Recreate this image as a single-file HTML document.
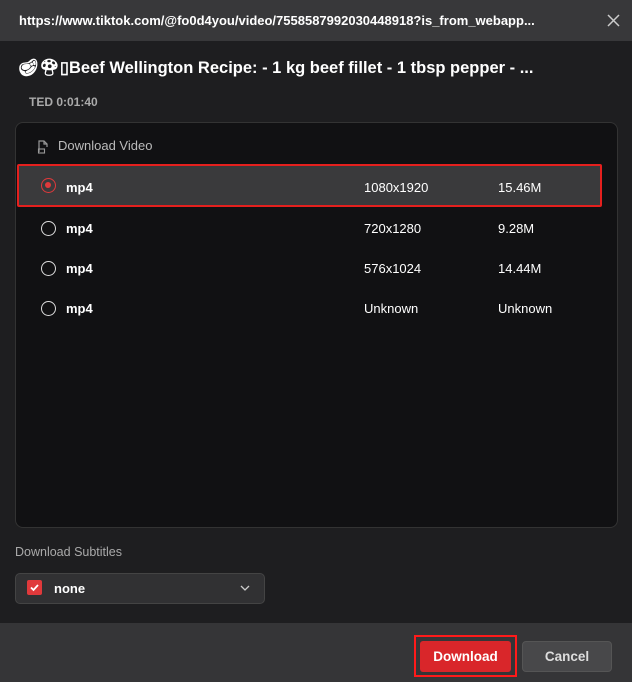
<!DOCTYPE html>
<html><head><style>
*{margin:0;padding:0;box-sizing:border-box}
body{width:632px;height:682px;background:#1e1e20;font-family:"Liberation Sans","Noto Sans CJK SC",sans-serif;color:#fff;position:relative;overflow:hidden;font-size:13px}
.abs{position:absolute}
.hdr{left:0;top:0;width:632px;height:41px;background:#38383a}
.row{left:17px;width:585px;height:40px}
.radio{position:absolute;left:24px;top:13px;width:15px;height:15px;border:1.5px solid #ddd;border-radius:50%}
.t{position:absolute;top:13px;font-size:13px}
</style></head><body>
<div class="abs hdr"></div>
<div class="abs" style="left:19px;top:13px;font-size:13px;font-weight:bold">https://www.tiktok.com/@fo0d4you/video/7558587992030448918?is_from_webapp...</div>
<svg class="abs" style="left:607px;top:14px" width="13" height="13"><path d="M1 1l11 11M12 1L1 12" stroke="#ccc" stroke-width="1.5"/></svg>
<div class="abs" style="left:18px;top:58px;font-size:16.5px;font-weight:bold">🥩︎🍄︎▯Beef Wellington Recipe: - 1 kg beef fillet - 1 tbsp pepper - ...</div>
<div class="abs" style="left:29px;top:95px;font-size:12px;color:#aaa;font-weight:bold">TED 0:01:40</div>
<div class="abs" style="left:15px;top:122px;width:603px;height:406px;background:#111113;border:1px solid #333;border-radius:8px"></div>
<svg class="abs" style="left:37px;top:140px" width="12" height="14" viewBox="0 0 12 14"><path d="M2 12V1h5l3 3v3M7 1v3h3" fill="none" stroke="#999" stroke-width="1.2"/><rect x="1.5" y="9" width="6" height="4" fill="none" stroke="#999" stroke-width="1.1"/></svg>
<div class="abs" style="left:58px;top:138px;color:#bbb;font-size:13px">Download Video</div>
<div class="abs row" style="top:164px;height:43px;background:#3a3a3c;border:2px solid #e5201e;border-radius:2px"><div class="radio" style="border-color:#e0393b;left:22px;top:12px"><div style="position:absolute;left:3px;top:3px;width:6px;height:6px;border-radius:50%;background:#e0393b"></div></div><div class="t" style="left:47px;top:14px;font-weight:bold">mp4</div><div class="t" style="left:345px;top:14px">1080x1920</div><div class="t" style="left:479px;top:14px">15.46M</div></div>
<div class="abs row" style="top:208px"><div class="radio"></div><div class="t" style="left:49px;font-weight:bold">mp4</div><div class="t" style="left:347px">720x1280</div><div class="t" style="left:481px">9.28M</div></div>
<div class="abs row" style="top:248px"><div class="radio"></div><div class="t" style="left:49px;font-weight:bold">mp4</div><div class="t" style="left:347px">576x1024</div><div class="t" style="left:481px">14.44M</div></div>
<div class="abs row" style="top:288px"><div class="radio"></div><div class="t" style="left:49px;font-weight:bold">mp4</div><div class="t" style="left:347px">Unknown</div><div class="t" style="left:481px">Unknown</div></div>
<div class="abs" style="left:15px;top:545px;color:#aaa;font-size:12.5px">Download Subtitles</div>
<div class="abs" style="left:15px;top:573px;width:250px;height:31px;background:#313133;border:1px solid #444;border-radius:5px"></div>
<div class="abs" style="left:27px;top:580px;width:15px;height:15px;background:#e0393b;border-radius:2px"><svg width="15" height="15"><path d="M4 7.5l2.5 2.5 4.5-5" fill="none" stroke="#fff" stroke-width="1.8"/></svg></div>
<div class="abs" style="left:54px;top:581px;font-weight:bold">none</div>
<svg class="abs" style="left:240px;top:585px" width="10" height="7"><path d="M1 1l4 4 4-4" fill="none" stroke="#ccc" stroke-width="1.3"/></svg>
<div class="abs" style="left:0;top:623px;width:632px;height:59px;background:#353537"></div>
<div class="abs" style="left:414px;top:635px;width:103px;height:42px;border:2px solid #ff1a1a"></div>
<div class="abs" style="left:420px;top:641px;width:91px;height:31px;background:#d9262a;border-radius:3px;text-align:center;line-height:31px;font-weight:bold;font-size:13.5px">Download</div>
<div class="abs" style="left:522px;top:641px;width:90px;height:31px;background:#48484a;border:1px solid #555;border-radius:4px;text-align:center;line-height:29px;font-weight:bold;font-size:13.5px;color:#ddd">Cancel</div>
</body></html>
